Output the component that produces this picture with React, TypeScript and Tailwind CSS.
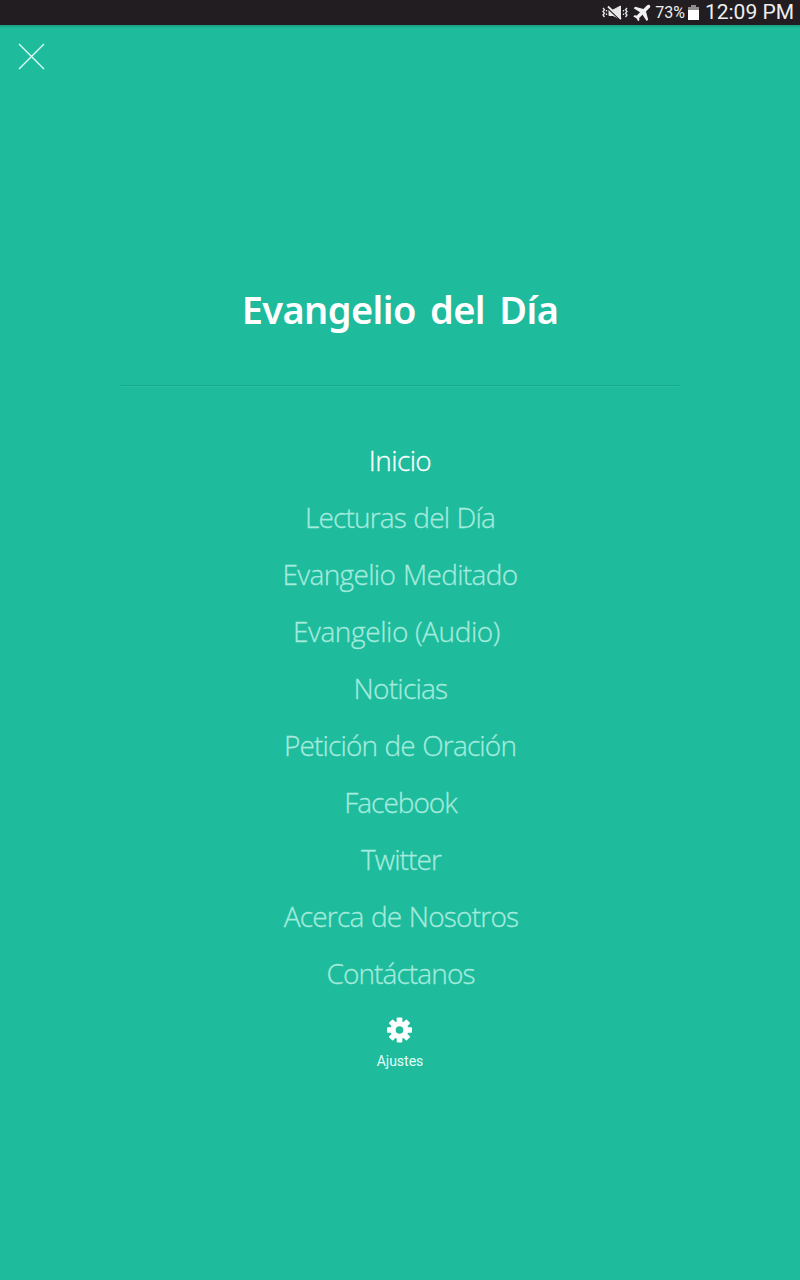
import React from "react";

const items = [
  { label: "Inicio", style: "text-white tracking-[-0.6px]" },
  { label: "Lecturas del Día", style: "text-[#a5ebdd] tracking-[-0.85px] [word-spacing:1px]" },
  { label: "Evangelio Meditado", style: "text-[#a5ebdd] tracking-[-0.65px] [word-spacing:1px]" },
  { label: "Evangelio (Audio)", style: "text-[#a5ebdd] tracking-[-0.4px] pr-[7px]" },
  { label: "Noticias", style: "text-[#a5ebdd] tracking-[-0.75px] pl-px" },
  { label: "Petición de Oración", style: "text-[#a5ebdd] tracking-[-0.85px] [word-spacing:1px]" },
  { label: "Facebook", style: "text-[#a5ebdd] tracking-[-1px] pl-px" },
  { label: "Twitter", style: "text-[#a5ebdd] tracking-[-0.9px] pl-[2px]" },
  { label: "Acerca de Nosotros", style: "text-[#a5ebdd] tracking-[-0.8px] [word-spacing:1px] pl-[2px]" },
  { label: "Contáctanos", style: "text-[#a5ebdd] tracking-[-0.9px] pl-px" },
];

const teeth = [0, 45, 90, 135];

function MutedIcon() {
  return (
    <svg className="mr-[5px] h-4 w-[26px]" viewBox="0 0 26 16" fill="none" stroke="#e8e8e8">
      <path d="M1 3l1.500 1.700L1 6.500l1.500 1.700L1 10l1.500 2M4.500 5v1.500M4.500 8.500V10M25 3l-1.500 1.700L25 6.500l-1.500 1.700L25 10l-1.500 2M21.500 5v1.500M21.500 8.500V10" strokeWidth="1.3" />
      <path d="M7 5h4l7.500-4v13L11 10.500H7z" fill="#e8e8e8" />
      <path d="M6 3.500l13 12" stroke="#211d20" strokeWidth="1.6" />
      <path d="M6 1.500l13 12.500" strokeWidth="1.8" />
    </svg>
  );
}

function PlaneIcon() {
  return (
    <svg className="mr-[4px] size-[18px]" viewBox="0 0 18 18" fill="#f0f0f0">
      <path d="M16.8 1.2c.8.8.6 1.9-.4 2.9L13 7.500l2.200 8.200-1.600 1.400-4.100-6.400-3.300 3.200.2 2.300-1.200 1.100-1.800-3.100-3.100-1.800 1.100-1.200 2.400.2 3.200-3.200L.7 4.300l1.500-1.600L10.400 5l3.500-3.500c1-.9 2.100-1.100 2.900-.3z" />
    </svg>
  );
}

function GearIcon() {
  return (
    <svg className="size-[26px]" viewBox="-12.5 -13 26 26">
      {teeth.map((angle) => (
        <rect key={angle} x="-2.8" y="-12.5" width="5.6" height="25" rx="0.8" fill="#fff" transform={`rotate(${angle})`} />
      ))}
      <circle r="9" fill="#fff" />
      <circle r="3.8" fill="#1ebb9d" />
    </svg>
  );
}

function StatusBar() {
  return (
    <div className="flex h-[25px] items-center justify-end bg-[#211d20] pr-[6px] font-['Roboto',sans-serif] text-[#eeeeee]">
      <MutedIcon />
      <PlaneIcon />
      <span className="mr-[3px] text-[16px] leading-6">73%</span>
      <svg className="mr-[6px] h-4 w-[11px]" viewBox="0 0 11 16">
        <path d="M3 0h5v2h3v4H0V2h3z" fill="#8e8d8f" />
        <path d="M0 5h11v10H0z" fill="#fff" />
      </svg>
      <span className="mb-[2px] text-[21px] leading-6">12:09 PM</span>
    </div>
  );
}

function App() {
  return (
    <div className="flex h-[1280px] w-[800px] flex-col overflow-hidden bg-[#1ebb9d]">
      <StatusBar />
      <div className="h-[3px] bg-linear-to-b from-[#189a80] to-[#1ebb9d]" />
      <button className="ml-[18px] mt-[15px] size-[27px]" aria-label="Cerrar">
        <svg className="size-[27px]" viewBox="0 0 27 27" stroke="#e5fff9" strokeWidth="1.3">
          <path d="M1 1l25 25M26 1L1 26" />
        </svg>
      </button>
      <h1 className="mt-[209px] h-[60px] text-center font-['Noto_Sans',sans-serif] text-[38px] font-semibold leading-[60px] tracking-[-0.6px] text-white [word-spacing:5px]">
        Evangelio del Día
      </h1>
      <div className="mx-[120px] mt-[46px] h-[2px] border-b border-[#27c4a5] bg-[#18a88b]" />
      <nav className="mt-[45px] flex flex-col items-center font-['Open_Sans',sans-serif] text-[28px] font-light [-webkit-text-stroke:0.3px]">
        {items.map((item) => (
          <a key={item.label} className={`h-[57px] whitespace-nowrap leading-[57px] ${item.style}`}>
            {item.label}
          </a>
        ))}
      </nav>
      <div className="mt-[15px] flex flex-col items-center font-['Roboto',sans-serif] text-[14px] leading-5 text-[#e5fff8]">
        <GearIcon />
        <span className="mt-[8px]">Ajustes</span>
      </div>
    </div>
  );
}

export default App;
